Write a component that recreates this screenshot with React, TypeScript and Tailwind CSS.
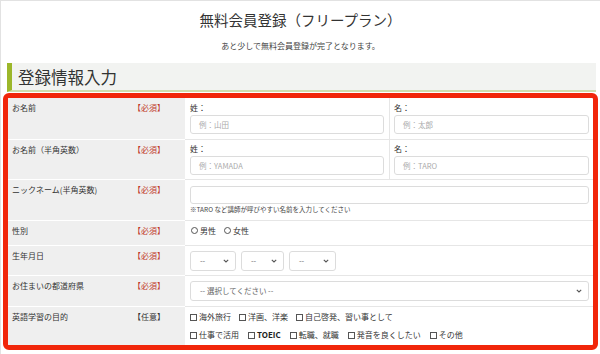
import React from "react";

const font = { fontFamily: '"Noto Sans CJK JP", "Noto Sans", sans-serif' };

function Required() {
  return <span className="text-[#c0392b]">【必須】</span>;
}

function Label({ name, optional }: { name: string; optional?: boolean }) {
  return (
    <div className="flex bg-[#efefef] border-b border-white pl-[4px] pt-[4px] text-[8px] leading-[11px] text-[#333]">
      <span className="w-[121px]">{name}</span>
      {optional ? <span>【任意】</span> : <Required />}
    </div>
  );
}

function TextBox({ placeholder, h = "h-[19px]" }: { placeholder?: string; h?: string }) {
  return (
    <div className={`${h} flex items-center rounded-[3px] border border-[#dcdcdc] bg-white px-[8px] text-[7.5px] text-[#aaa]`}>
      {placeholder}
    </div>
  );
}

function Chevron() {
  return (
    <svg width="6" height="4" viewBox="0 0 6 4" className="shrink-0">
      <path d="M0.8 0.8 L3 3 L5.2 0.8" fill="none" stroke="#555" strokeWidth="1.1" />
    </svg>
  );
}

function Select({ w, text }: { w: string; text: string }) {
  return (
    <div className={`${w} h-[20px] flex items-center justify-between rounded-[3px] border border-[#dcdcdc] bg-white pl-[9px] pr-[6px] text-[7.5px] text-[#666]`}>
      <span>{text}</span>
      <Chevron />
    </div>
  );
}

function Check({ label, bold }: { label: string; bold?: boolean }) {
  return (
    <span className="flex items-center gap-[2px]">
      <span className="w-[7px] h-[7px] border border-[#555] bg-white" />
      <span className={bold ? "font-bold text-[#222]" : ""}>{label}</span>
    </span>
  );
}

function Radio({ label }: { label: string }) {
  return (
    <span className="flex items-center gap-[2px]">
      <span className="w-[7px] h-[7px] rounded-full border border-[#555]" />
      <span>{label}</span>
    </span>
  );
}

export default function App() {
  return (
    <div style={font} className="w-[600px] h-[354px] overflow-hidden bg-white border-l border-t border-[#e2e2e2] text-[#333]">
      <h1 className="mt-[9px] text-center text-[14.5px] leading-[20px] text-[#333]">無料会員登録（フリープラン）</h1>
      <p className="mt-[10px] text-center text-[8px] leading-[11px] text-[#444]">あと少しで無料会員登録が完了となります。</p>

      <div className="mt-[12px] ml-[6px] mr-[4px] h-[29px] flex items-center bg-[#f2f3f1] border-l-[5px] border-[#9cb72a] border-b-2 border-b-[#cfdcae] pl-[6px]">
        <span className="text-[16.5px] leading-[22px] text-[#333]">登録情報入力</span>
      </div>

      <div className="mt-[1px] ml-[2px] mr-[2px] h-[257px] overflow-hidden rounded-[6px] border-[5px] border-[#f1260a] bg-white">
        {/* お名前 */}
        <div className="grid grid-cols-[177px_1fr] h-[42px]">
          <Label name="お名前" />
          <div className="flex border-b border-[#e6e6e6]">
            <div className="w-[205px] pl-[5px] pr-[5px] pt-[4px] border-r border-[#e6e6e6]">
              <div className="text-[8px] leading-[11px]">姓：</div>
              <div className="mt-[2px]"><TextBox placeholder="例：山田" /></div>
            </div>
            <div className="flex-1 pl-[4px] pr-[4px] pt-[4px]">
              <div className="text-[8px] leading-[11px]">名：</div>
              <div className="mt-[2px]"><TextBox placeholder="例：太郎" /></div>
            </div>
          </div>
        </div>

        {/* お名前（半角英数） */}
        <div className="grid grid-cols-[177px_1fr] h-[40px]">
          <Label name="お名前（半角英数）" />
          <div className="flex border-b border-[#e6e6e6]">
            <div className="w-[205px] pl-[5px] pr-[5px] pt-[3px] border-r border-[#e6e6e6]">
              <div className="text-[8px] leading-[11px]">姓：</div>
              <div className="mt-[2px]"><TextBox placeholder="例：YAMADA" /></div>
            </div>
            <div className="flex-1 pl-[4px] pr-[4px] pt-[3px]">
              <div className="text-[8px] leading-[11px]">名：</div>
              <div className="mt-[2px]"><TextBox placeholder="例：TARO" /></div>
            </div>
          </div>
        </div>

        {/* ニックネーム */}
        <div className="grid grid-cols-[177px_1fr] h-[41px]">
          <Label name="ニックネーム(半角英数)" />
          <div className="border-b border-[#e6e6e6] pl-[5px] pr-[4px] pt-[6px]">
            <TextBox h="h-[18px]" />
            <div className="mt-[1px] text-[6.5px] leading-[9px] text-[#444]">※TARO など講師が呼びやすい名前を入力してください</div>
          </div>
        </div>

        {/* 性別 */}
        <div className="grid grid-cols-[177px_1fr] h-[25px]">
          <Label name="性別" />
          <div className="border-b border-[#e6e6e6] pl-[6px] pt-[4px]">
            <div className="flex gap-[8px] text-[8px] leading-[11px]">
              <Radio label="男性" />
              <Radio label="女性" />
            </div>
          </div>
        </div>

        {/* 生年月日 */}
        <div className="grid grid-cols-[177px_1fr] h-[30px]">
          <Label name="生年月日" />
          <div className="flex gap-[5px] border-b border-[#e6e6e6] pl-[5px] pt-[5px]">
            <Select w="w-[46px]" text="--" />
            <Select w="w-[43px]" text="--" />
            <Select w="w-[47px]" text="--" />
          </div>
        </div>

        {/* 都道府県 */}
        <div className="grid grid-cols-[177px_1fr] h-[31px]">
          <Label name="お住まいの都道府県" />
          <div className="border-b border-[#e6e6e6] pl-[5px] pr-[4px] pt-[5px]">
            <Select w="w-full" text="-- 選択してください --" />
          </div>
        </div>

        {/* 英語学習の目的 */}
        <div className="grid grid-cols-[177px_1fr] h-[40px]">
          <Label name="英語学習の目的" optional />
          <div className="pl-[5px] pt-[4px] text-[8px] leading-[12px] text-[#333]">
            <div className="flex gap-[8px]">
              <Check label="海外旅行" />
              <Check label="洋画、洋楽" />
              <Check label="自己啓発、習い事として" />
            </div>
            <div className="mt-[6px] flex gap-[9px]">
              <Check label="仕事で活用" />
              <Check label="TOEIC" bold />
              <Check label="転職、就職" />
              <Check label="発音を良くしたい" />
              <Check label="その他" />
            </div>
          </div>
        </div>
      </div>
    </div>
  );
}
